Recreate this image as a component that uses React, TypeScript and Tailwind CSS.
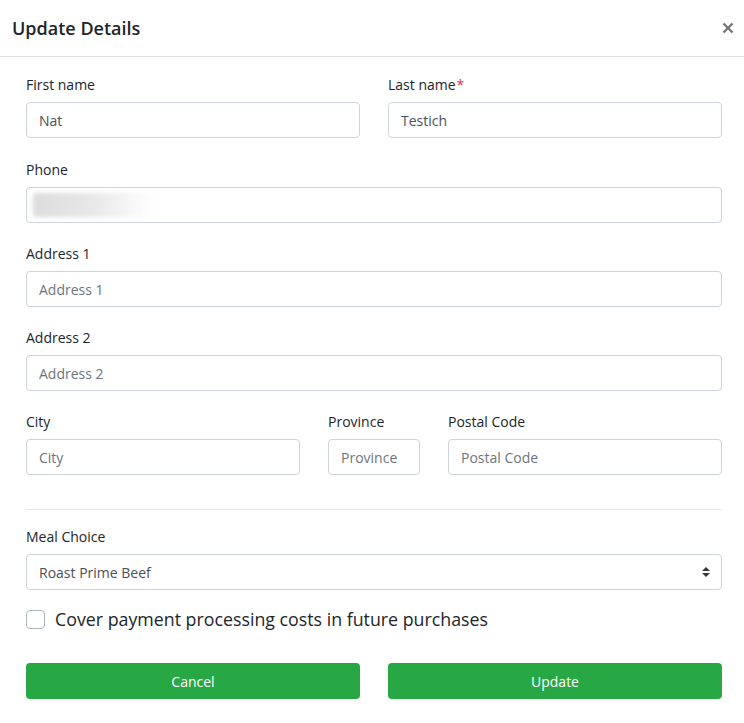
const font = { fontFamily: '"Open Sans", "Noto Sans", Arial, sans-serif' };

function Field({ label, required, placeholder, value, className }: {
  label: string;
  required?: boolean;
  placeholder?: string;
  value?: string;
  className?: string;
}) {
  return (
    <div className={className}>
      <label className="block text-[14px] leading-6 text-[#212529] mb-[5px]">
        {label}
        {required && <span className="text-[#dc3545] ml-px">*</span>}
      </label>
      <input
        type="text"
        defaultValue={value}
        placeholder={placeholder}
        className="block w-full h-9 px-3 text-[14px] text-[#495057] placeholder:text-[#6c757d] bg-white border border-[#ced4da] rounded outline-none"
        style={font}
      />
    </div>
  );
}

export default function App() {
  return (
    <div className="w-[744px] h-[723px] bg-white text-[#212529]" style={font}>
      <div className="flex items-center justify-between h-[57px] pl-3 pr-[10px] border-b border-[#dee2e6]">
        <h5 className="text-[18px] font-semibold leading-6 text-[#212529]">Update Details</h5>
        <button className="text-[#777] p-0">
          <svg width="12" height="12" viewBox="0 0 12 12">
            <path d="M1.5 1.5 L10.5 10.5 M10.5 1.5 L1.5 10.5" stroke="currentColor" strokeWidth="2.4" />
          </svg>
        </button>
      </div>

      <div className="pl-[26px] pr-[22px] pt-4">
        <div className="grid grid-cols-2 gap-7 mb-[20px]">
          <Field label="First name" value="Nat" />
          <Field label="Last name" required value="Testich" />
        </div>

        <div className="mb-[19px]">
          <label className="block text-[14px] leading-6 mb-[5px]">Phone</label>
          <div className="relative h-9 border border-[#ced4da] rounded bg-white overflow-hidden">
            <div className="absolute left-[6px] top-[5px] h-6 w-[120px] rounded-sm bg-gradient-to-r from-[#dcdcdc] via-[#e8e8e8] to-transparent blur-[2px]" />
          </div>
        </div>

        <Field className="mb-[19px]" label="Address 1" placeholder="Address 1" />
        <Field className="mb-[19px]" label="Address 2" placeholder="Address 2" />

        <div className="flex gap-7">
          <Field className="flex-1" label="City" placeholder="City" />
          <Field className="w-[92px]" label="Province" placeholder="Province" />
          <Field className="flex-1" label="Postal Code" placeholder="Postal Code" />
        </div>

        <hr className="mt-[34px] mb-[15px] border-t border-[#e5e7eb]" />

        <div className="mb-[15px]">
          <label className="block text-[14px] leading-6 mb-[5px]">Meal Choice</label>
          <div className="relative">
            <select
              className="block w-full h-9 pl-3 pr-8 text-[14px] text-[#495057] bg-white border border-[#ced4da] rounded outline-none appearance-none"
              style={font}
              defaultValue="beef"
            >
              <option value="beef">Roast Prime Beef</option>
            </select>
            <svg className="absolute right-[12px] top-[13px] pointer-events-none" width="8" height="10" viewBox="0 0 8 10">
              <path d="M4 0 L8 4 H0 Z M0 6 H8 L4 10 Z" fill="#343a40" />
            </svg>
          </div>
        </div>

        <label className="flex items-center gap-[10px] h-7 mb-[30px]">
          <span className="w-[19px] h-[19px] rounded border border-[#adb5bd] bg-white shrink-0" />
          <span className="text-[17.8px] leading-7 text-[#212529]">Cover payment processing costs in future purchases</span>
        </label>

        <div className="grid grid-cols-2 gap-7">
          <button className="h-9 rounded bg-[#28a745] text-white text-[14px]">Cancel</button>
          <button className="h-9 rounded bg-[#28a745] text-white text-[14px]">Update</button>
        </div>
      </div>
    </div>
  );
}
